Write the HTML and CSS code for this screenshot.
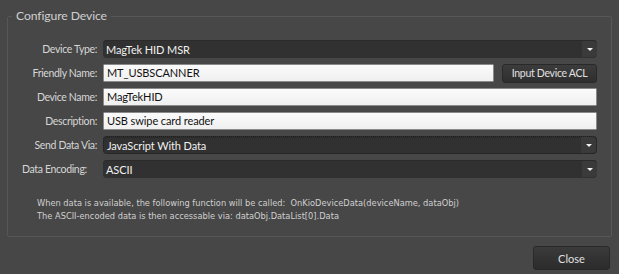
FILE: index.html
```html
<!DOCTYPE html>
<html>
<head>
<meta charset="utf-8">
<link rel="stylesheet" href="styles.css">
</head>
<body>
<div class="dialog">
  <fieldset class="group">
    <legend class="legend">Configure Device</legend>
    <div class="rows">
      <div class="row">
        <label class="label">Device Type:</label>
        <div class="select"><span class="select-text">MagTek HID MSR</span><span class="arrow"></span></div>
      </div>
      <div class="row">
        <label class="label">Friendly Name:</label>
        <div class="input input-short">MT_USBSCANNER</div>
        <button class="btn btn-acl">Input Device ACL</button>
      </div>
      <div class="row">
        <label class="label">Device Name:</label>
        <div class="input">MagTekHID</div>
      </div>
      <div class="row">
        <label class="label">Description:</label>
        <div class="input">USB swipe card reader</div>
      </div>
      <div class="row">
        <label class="label">Send Data Via:</label>
        <div class="select select-focus"><span class="select-text">JavaScript With Data</span><span class="arrow"></span></div>
      </div>
      <div class="row">
        <label class="label label-left">Data Encoding:</label>
        <div class="select"><span class="select-text">ASCII</span><span class="arrow"></span></div>
      </div>
    </div>
    <div class="info">
      <div>When data is available, the following function will be called:&nbsp; OnKioDeviceData(deviceName, dataObj)</div>
      <div>The ASCII-encoded data is then accessable via: dataObj.DataList[0].Data</div>
    </div>
  </fieldset>
  <div class="footer">
    <button class="btn btn-close">Close</button>
  </div>
</div>
</body>
</html>
```
FILE: styles.css
```css
html, body {
  margin: 0;
  padding: 0;
  background: #474747;
}
body {
  width: 619px;
  height: 274px;
  overflow: hidden;
  font-family: Lato, "Noto Sans", sans-serif;
}
.dialog {
  padding: 7px 7px 0 7px;
}
.group {
  margin: 0;
  width: 605px;
  height: 230px;
  box-sizing: border-box;
  border: 1px solid #575757;
  border-radius: 2px;
  padding: 0 14px 0 0;
}
.legend {
  color: #cfcfcf;
  font-size: 12.2px;
  letter-spacing: -0.1px;
  padding: 0 4px;
  margin-left: 4px;
  line-height: 18px;
}
.rows {
  display: flex;
  flex-direction: column;
  gap: 6px;
  margin-top: 15px;
}
.row {
  display: flex;
  align-items: center;
  height: 18px;
}
.label {
  width: 89px;
  flex: none;
  text-align: right;
  margin-right: 6px;
  color: #d6d6d6;
  font-size: 10.5px;
  letter-spacing: -0.35px;
}
.label-left {
  text-align: left;
  padding-left: 14px;
  box-sizing: border-box;
  width: 89px;
}
.select {
  flex: 1;
  height: 18px;
  box-sizing: border-box;
  background: #313131;
  border-radius: 4px;
  display: flex;
  align-items: center;
  box-shadow: inset 0 1px 0 #2a2a2a;
}
.select-focus {
  border: 1px dotted #1e1e1e;
}
.select-text {
  flex: 1;
  color: #f0f0f0;
  font-size: 11px;
  letter-spacing: -0.1px;
  padding-left: 3px;
}
.arrow {
  width: 15px;
  height: 16px;
  background: #3a3a3a;
  border-radius: 0 4px 4px 0;
  display: flex;
  align-items: center;
  justify-content: center;
}
.arrow::after {
  content: "";
  width: 0;
  height: 0;
  border-left: 3px solid transparent;
  border-right: 3px solid transparent;
  border-top: 3px solid #f4f4f4;
  margin-top: 1px;
}
.input {
  flex: 1;
  height: 18px;
  box-sizing: border-box;
  background: linear-gradient(#fbfbfb, #efefef);
  border: 1px solid #8a8a8a;
  border-radius: 1px;
  color: #111;
  font-size: 11px;
  letter-spacing: -0.1px;
  line-height: 16px;
  padding-left: 3px;
}
.input-short {
  margin-right: 8px;
}
.btn {
  font-family: Lato, "Noto Sans", sans-serif;
  color: #e0e0e0;
  background: linear-gradient(#3c3c3c, #2e2e2e);
  border: 1px solid #292929;
  border-radius: 3px;
  padding: 0;
  cursor: pointer;
}
.btn-acl {
  width: 95px;
  height: 19px;
  flex: none;
  font-size: 10.5px;
  letter-spacing: -0.3px;
}
.info {
  margin: 18px 0 0 29px;
  color: #d0d0d0;
  font-family: "DejaVu Sans Condensed", "DejaVu Sans", sans-serif;
  font-size: 9.2px;
  line-height: 13px;
}
.footer {
  display: flex;
  justify-content: flex-end;
  padding: 9px 2px 0 0;
}
.btn-close {
  width: 77px;
  height: 24px;
  font-size: 11px;
  background: linear-gradient(#3b3b3b, #2b2b2b);
}
```
